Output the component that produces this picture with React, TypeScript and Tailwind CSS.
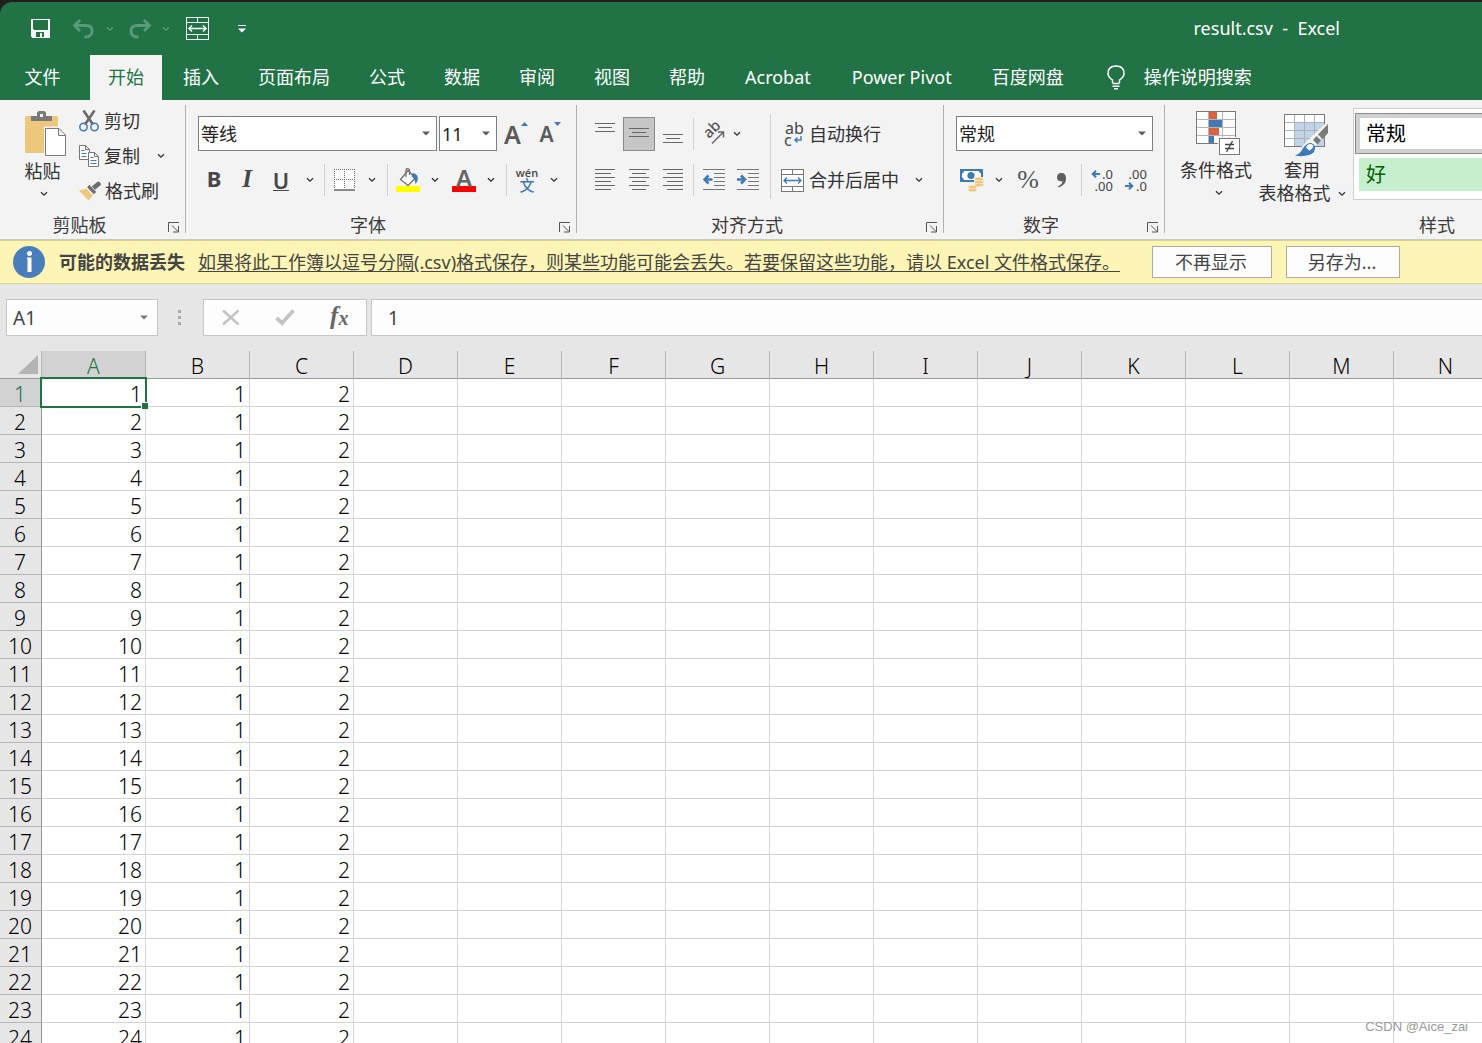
import React, { useState } from "react";

const UI = "font-['Noto_Sans','Noto_Sans_CJK_SC',sans-serif]";
const COLUMNS = ["A", "B", "C", "D", "E", "F", "G", "H", "I", "J", "K", "L", "M", "N"];
const ROWS = Array.from({ length: 24 }, (_, i) => [i + 1, 1, 2]);
const TABS = ["插入", "页面布局", "公式", "数据", "审阅", "视图", "帮助", "Acrobat", "Power Pivot", "百度网盘"];

type Kids = { children?: React.ReactNode };

function Chevron({ className = "text-[#333]" }: { className?: string }) {
  return (
    <svg width="8" height="6" viewBox="0 0 8 6" className={className} fill="none" stroke="currentColor" strokeWidth="1.3" aria-hidden="true">
      <path d="M1 1.2 4 4.2 7 1.2" />
    </svg>
  );
}

function Caret({ className = "text-[#5e5e5e]" }: { className?: string }) {
  return (
    <svg width="8" height="5" viewBox="0 0 8 5" className={className} fill="currentColor" aria-hidden="true">
      <path d="M0 .5h8L4 4.6z" />
    </svg>
  );
}

function Tool({ label, className = "w-[34px]", children }: Kids & { label: string; className?: string }) {
  return (
    <button type="button" aria-label={label} title={label} className={`flex h-[34px] shrink-0 items-center justify-center ${className}`}>
      {children}
    </button>
  );
}

function Drop({ label, className = "w-5" }: { label: string; className?: string }) {
  return (
    <Tool label={label} className={className}>
      <Chevron />
    </Tool>
  );
}

function Sep({ className = "mx-[3px] h-8" }: { className?: string }) {
  return <div className={`w-px shrink-0 self-center bg-[#d0d0d0] ${className}`} />;
}

function Group({ title, width, launcher = true, children }: Kids & { title: string; width: string; launcher?: boolean }) {
  return (
    <section aria-label={title} className={`flex shrink-0 ${width}`}>
      <div className="flex min-w-0 flex-1 flex-col">
        <div className="h-[112px]">{children}</div>
        <div className="flex h-[26px] items-center">
          <h2 className="flex-1 text-center text-[18px] leading-6 text-[#3b3b3b]">{title}</h2>
          {launcher && (
            <button type="button" aria-label={`${title}设置`} className="flex w-[26px] justify-end pt-1 pr-[5px]">
              <svg width="12" height="11" viewBox="0 0 12 11" fill="none" stroke="#555" aria-hidden="true">
                <path d="M.5 10V.5H11M4 3.5l6 6M10.500 4v6H5" />
              </svg>
            </button>
          )}
        </div>
      </div>
      {launcher && <div className="mt-[5px] h-32 w-px bg-[#b1b1b1]" />}
    </section>
  );
}

function Combo({ label, value, className }: { label: string; value: string; className: string }) {
  return (
    <div className={`relative h-[35px] ${className}`}>
      <select
        aria-label={label}
        defaultValue={value}
        className="h-full w-full appearance-none border border-[#7f7f7f] bg-white pl-0.5 text-[18px] leading-8 text-[#222] outline-none"
      >
        <option>{value}</option>
      </select>
      <span className="pointer-events-none absolute inset-y-0 right-[7px] flex items-center">
        <Caret />
      </span>
    </div>
  );
}

function Lines({ rows }: { rows: [number, number, number][] }) {
  return (
    <svg width="20" height="22" viewBox="0 0 20 22" fill="#666" shapeRendering="crispEdges" aria-hidden="true">
      {rows.map(([x, y, w]) => (
        <rect key={y} x={x} y={y} width={w} height="1" />
      ))}
    </svg>
  );
}

function IndentIcon({ out }: { out: boolean }) {
  return (
    <svg width="22" height="22" viewBox="0 0 22 22" aria-hidden="true">
      <path d="M0 .5h22M11 4.500h11M11 8.500h11M11 12.500h11M11 16.500h11M0 20.500h22" stroke="#777" />
      <path
        d={out ? "M9.500 10.500H2M5.500 6.500l-4 4 4 4" : "M0 10.500h7.500M4 6.500l4 4-4 4"}
        fill="none"
        stroke="#3f7ab5"
        strokeWidth="2.600"
      />
    </svg>
  );
}

function MergeIcon({ frame, arrow, fill }: { frame: string; arrow: string; fill: string }) {
  return (
    <svg width="23" height="23" viewBox="0 0 23 23" fill="none" aria-hidden="true">
      <rect x=".5" y=".5" width="22" height="22" fill={fill} stroke={frame} />
      <path d="M0 5.500h23M0 17.500h23M11.500 1v4M11.500 18v4" stroke={frame} />
      <path d="M3 11.500h17M6 8.500l-3 3 3 3M17 8.500l3 3-3 3" stroke={arrow} strokeWidth="1.400" />
    </svg>
  );
}

function PasteIcon() {
  return (
    <svg width="42" height="46" viewBox="0 0 42 46" aria-hidden="true">
      <rect y="5" width="33" height="37" rx="1.500" fill="#edc77c" />
      <path d="M6 5h6V2.500Q12 0 14.500 0h4Q21 0 21 2.500V5h6v5H6z" fill="#7a7a7a" />
      <rect x="15" y="3" width="3" height="3" fill="#f3f3f3" />
      <path d="M19 15.500h16L42 22.500V46H19z" fill="#f3f3f3" />
      <path d="M20.500 17.500h13.500l6.500 6.500v20.500h-20zM33.500 17.500V24.500h7" fill="#fff" stroke="#7a7a7a" />
    </svg>
  );
}

function CutIcon() {
  return (
    <svg width="20" height="22" viewBox="0 0 20 22" fill="none" aria-hidden="true">
      <path d="M4.500.5 14 14.500M15.500.5 6 14.500" stroke="#6a6a6a" strokeWidth="2.600" />
      <circle cx="4.500" cy="17" r="3.700" stroke="#3f7ab5" strokeWidth="1.500" />
      <circle cx="15.500" cy="17" r="3.700" stroke="#3f7ab5" strokeWidth="1.500" />
    </svg>
  );
}

function CopyIcon() {
  return (
    <svg width="20" height="22" viewBox="0 0 20 22" fill="#fff" aria-hidden="true">
      <path d="M.5.5h6l4 4v10H.5zM6.500.5v4h4" stroke="#777" />
      <path d="M2.500 5.500h3M2.500 8.500h5M2.500 11.500h5" stroke="#3f7ab5" />
      <path d="M9.500 7.500h6l4 4v10h-10zM15.500 7.500v4h4" stroke="#777" />
      <path d="M11.500 12.500h3M11.500 15.500h6M11.500 18.500h6" stroke="#3f7ab5" />
    </svg>
  );
}

function BrushIcon() {
  return (
    <svg width="22" height="20" viewBox="0 0 23 20" aria-hidden="true">
      <path d="M0 9.500 7.500 7.500 14.500 14.500 10 20Z" fill="#edc77c" />
      <path d="M8.500 6 11 3.500 18 11 15.500 13.500z" fill="#6d6d6d" />
      <path d="M13 5.500 19 .5Q20.500-.5 22 1t.5 3L16.500 9z" fill="#6d6d6d" />
      <path d="M12 4.500 17 9.500" stroke="#f3f3f3" strokeWidth=".8" />
    </svg>
  );
}

function BucketIcon() {
  return (
    <svg width="24" height="24" viewBox="0 0 24 24" fill="none" aria-hidden="true">
      <path d="M12 2.500 19.500 10 12 17.500 4.500 11.500z" fill="#fff" stroke="#6a6a6a" strokeWidth="1.200" />
      <path d="M10 9V2Q10 .7 11.500 .7T13.500 2v5" stroke="#6a6a6a" strokeWidth="1.200" />
      <path d="M17 5q6 1 4.500 8l-2 3q-.5-5-4-8z" fill="#3f7ab5" />
      <rect y="18" width="24" height="6" fill="#ff0" />
    </svg>
  );
}

function CurrencyIcon() {
  return (
    <svg width="24" height="23" viewBox="0 0 24 23" aria-hidden="true">
      <rect width="23" height="13" fill="#3f7ab5" />
      <path d="M4 2h15q0 2 2 2.500v4q-2 0-2 2.500H4q0-2-2-2.500v-4Q4 4 4 2z" fill="#fff" />
      <circle cx="11" cy="6.500" r="3.600" fill="#3f7ab5" />
      <path d="M14 8h10v10h-6v5H7v-8h7z" fill="#f3f3f3" />
      <g fill="#edc77c" stroke="#f6e6c8" strokeWidth=".7">
        <ellipse cx="19" cy="16" rx="4.500" ry="1.700" />
        <ellipse cx="19" cy="13" rx="4.500" ry="1.700" />
        <ellipse cx="19" cy="10" rx="4.500" ry="1.700" />
        <ellipse cx="12.500" cy="21" rx="4.500" ry="1.700" />
        <ellipse cx="12.500" cy="18" rx="4.500" ry="1.700" />
      </g>
    </svg>
  );
}

function BlueArrow({ left = false }: { left?: boolean }) {
  return (
    <svg width="9" height="8" viewBox="0 0 9 8" fill="none" stroke="#3f7ab5" strokeWidth="2" className="mr-0.5" aria-hidden="true">
      <path d={left ? "M9 4H2M5 .7 1.700 4 5 7.300" : "M0 4h7M4 .7 7.300 4 4 7.300"} />
    </svg>
  );
}

function DecimalIcon({ more }: { more: boolean }) {
  return (
    <span className="flex flex-col font-['Noto_Sans',sans-serif] text-[13px] leading-3 text-[#444]">
      <span className="flex items-center justify-end">
        {more && <BlueArrow left />}
        {more ? ".0" : ".00"}
      </span>
      <span className="flex items-center justify-end">
        {!more && <BlueArrow />}
        {more ? ".00" : ".0"}
      </span>
    </span>
  );
}

function ConditionalIcon() {
  return (
    <svg width="44" height="44" viewBox="0 0 44 44" aria-hidden="true">
      <rect x=".5" y=".5" width="39" height="32" fill="#fff" stroke="#7a7a7a" />
      <path d="M12.500 1v31M26.500 1v31M1 8.500h38M1 16.500h38M1 24.500h38" stroke="#b5b5b5" />
      <rect x="13" y="1" width="8" height="7" fill="#dc6141" />
      <rect x="13" y="9" width="13" height="7" fill="#3f7ab5" />
      <rect x="13" y="17" width="10" height="7" fill="#dc6141" />
      <rect x="13" y="25" width="5" height="7" fill="#3f7ab5" />
      <rect x="22" y="26" width="22" height="18" fill="#f3f3f3" />
      <rect x="23.500" y="27.500" width="20" height="16" fill="#fff" stroke="#7a7a7a" />
      <path d="M29 33.500h9M29 37.500h9M36.500 30l-6 11" stroke="#444" strokeWidth="1.300" />
    </svg>
  );
}

function TableFormatIcon() {
  return (
    <svg width="44" height="43" viewBox="0 0 44 43" aria-hidden="true">
      <rect x=".5" y=".5" width="40" height="32" fill="#fff" stroke="#7a7a7a" />
      <rect x="10" y="9" width="30" height="23" fill="#c0d4ea" />
      <path d="M10.500 1v31M20.500 1v31M30.500 1v31M1 8.500h39M1 16.500h39M1 24.500h39" stroke="#b0b0b0" />
      <path d="M44 7v9L29 35l-9 8H9l12-14z" fill="#f3f3f3" />
      <path d="M44 10v9L38.500 25l-4.500-4.500z" fill="#7a7a7a" />
      <path d="M32.500 22l4.500 4.500-3.500 4-4.500-4.500z" fill="#7a7a7a" />
      <path d="M22 31q5-4 9 1 1 7-6 9-7 2-14 .5 5-2 7-5.500 1-3 4-5z" fill="#3f7ab5" />
      <path d="M22.500 31q5-3.500 7.500 1l-1.500 3-3 2-4-3z" fill="#fff" stroke="#3f7ab5" />
    </svg>
  );
}

function TitleBar() {
  return (
    <header className="flex h-[53px] shrink-0 items-center rounded-tl-xl bg-[#217346] text-white">
      <div className="flex items-center pl-[31px]">
        <button type="button" aria-label="保存" className="w-[19px]">
          <svg width="19" height="19" viewBox="0 0 19 19" shapeRendering="crispEdges" aria-hidden="true">
            <path fillRule="evenodd" d="M0 0h19v19H1l-1-1zM2 1v9l1 1h13l1-1V1zM5 13v5h4v-4h2v4h2v-5z" fill="#f6faf7" />
          </svg>
        </button>
        <button type="button" aria-label="撤消" className="ml-[22px] w-6 text-[#5a9a77]">
          <svg width="24" height="20" viewBox="0 0 24 20" fill="none" stroke="currentColor" strokeWidth="2.800" aria-hidden="true">
            <path d="M8 1 2.500 6.500 8 12M3 6.500h11q6 0 6 5.500t-6 6h-1.500" />
          </svg>
        </button>
        <button type="button" aria-label="撤消选项" className="flex w-7 justify-center">
          <Chevron className="text-[#5a9a77]" />
        </button>
        <button type="button" aria-label="恢复" className="ml-1 w-6 text-[#5a9a77]">
          <svg width="24" height="20" viewBox="0 0 24 20" fill="none" stroke="currentColor" strokeWidth="2.800" aria-hidden="true">
            <path d="M16 1l5.500 5.500L16 12M21 6.500H9q-6 0-6 5.500t6 6h1.500" />
          </svg>
        </button>
        <button type="button" aria-label="恢复选项" className="flex w-7 justify-center">
          <Chevron className="text-[#5a9a77]" />
        </button>
        <button type="button" aria-label="合并后居中" className="ml-1.5 w-6">
          <MergeIcon frame="#f2f8f4" arrow="#ffffff" fill="none" />
        </button>
        <button type="button" aria-label="自定义快速访问工具栏" className="ml-7">
          <svg width="8" height="8" viewBox="0 0 8 8" fill="#fff" aria-hidden="true">
            <path d="M0 0h8v1H0zM0 3.500h8l-4 4z" />
          </svg>
        </button>
      </div>
      <h1 className="ml-auto pr-[142px] pb-0.5 text-[18px] leading-6 whitespace-pre">{"result.csv  -  Excel"}</h1>
    </header>
  );
}

function TabBar() {
  return (
    <nav aria-label="功能区" className="flex h-[45px] shrink-0 overflow-hidden bg-[#217346] text-[18px] leading-6 whitespace-nowrap text-white">
      <div className="flex gap-[3px]">
        <button type="button" className="w-[87px] pr-0.5 pb-0.5">文件</button>
        <button type="button" className="bg-[#f3f3f3] px-[18px] pb-0.5 text-[#217346]">开始</button>
        {TABS.map((t) => (
          <button type="button" key={t} className={/^[A-Z]/.test(t) ? "px-[19px] pb-0.5" : "px-[18px] pb-0.5"}>
            {t}
          </button>
        ))}
      </div>
      <label className="flex flex-1 items-center pl-[25px]">
        <svg width="18" height="25" viewBox="0 0 18 25" fill="none" stroke="#fff" strokeWidth="1.500" aria-hidden="true">
          <path d="M5.500 18v-3Q1 12 1 8.500 1 1 9 1t8 7.500q0 3.500-4.500 6.500v3M5.500 18.500h7M5.500 21.200h7M7 23.800h4" />
        </svg>
        <input aria-label="操作说明搜索" placeholder="操作说明搜索" className="ml-[19px] w-40 bg-transparent pb-0.5 outline-none placeholder:text-white" />
      </label>
    </nav>
  );
}

function Ribbon() {
  const row = "flex items-center";
  return (
    <div className="flex h-[140px] shrink-0 overflow-hidden border-b border-[#c8c8c8] bg-[#f3f3f3] text-[18px] leading-6 whitespace-nowrap text-[#333]">
      <Group title="剪贴板" width="w-[186px]">
        <div className="flex">
          <button type="button" className="flex w-[79px] flex-col items-center pt-[11px] pl-1.5">
            <span className="pl-1.5"><PasteIcon /></span>
            <span className="pt-0.5">粘贴</span>
            <span className="pt-2 pl-0.5"><Chevron /></span>
          </button>
          <div className="flex flex-col pt-[3px]">
            <button type="button" className="flex h-[35px] items-center gap-[5px]"><CutIcon />剪切</button>
            <div className="flex h-[35px] items-center">
              <button type="button" className="flex items-center gap-[5px]"><CopyIcon />复制</button>
              <button type="button" aria-label="复制选项" className="ml-[17px]"><Chevron /></button>
            </div>
            <button type="button" className="flex h-[35px] items-center gap-1"><BrushIcon />格式刷</button>
          </div>
        </div>
      </Group>

      <Group title="字体" width="w-[391px]">
        <div className="flex flex-col gap-3 pt-4 pl-3">
          <div className={row}>
            <Combo label="字体" value="等线" className="w-[239px]" />
            <Combo label="字号" value="11" className="ml-0.5 w-[58px]" />
            <Tool label="增大字号">
              <span className="flex pl-1 text-[#5a5a5a]">
                <span className="text-[25px] font-semibold">A</span>
                <svg width="7" height="4" viewBox="0 0 7 4" fill="#3f7ab5" aria-hidden="true"><path d="M0 4h7L3.500 0z" /></svg>
              </span>
            </Tool>
            <Tool label="减小字号">
              <span className="flex pl-1 text-[#5a5a5a]">
                <span className="text-[21px] font-semibold">A</span>
                <svg width="7" height="4" viewBox="0 0 7 4" fill="#3f7ab5" aria-hidden="true"><path d="M0 0h7L3.500 4z" /></svg>
              </span>
            </Tool>
          </div>
          <div className={`${row} text-[#484848]`}>
            <Tool label="加粗" className="w-8"><b className="pb-1 text-[22px]">B</b></Tool>
            <Tool label="倾斜"><i className="pb-0.5 font-['Liberation_Serif',serif] text-[25px] font-bold">I</i></Tool>
            <Tool label="下划线"><span className="border-b border-[#484848] text-[22px] leading-5 font-semibold">U</span></Tool>
            <Drop label="下划线选项" className="w-[23px]" />
            <Sep />
            <Tool label="边框" className="w-8">
              <svg width="21" height="22" viewBox="0 0 21 22" fill="none" stroke="#666" aria-hidden="true">
                <rect width="21" height="21" fill="#fff" stroke="none" />
                <path d="M0 .5h21M0 10.500h21M.5 0v20M10.500 0v20M20.500 0v20" strokeDasharray="1 1" />
                <path d="M0 21h21" strokeWidth="1.500" />
              </svg>
            </Tool>
            <Drop label="边框选项" className="w-6" />
            <Sep />
            <Tool label="填充颜色"><BucketIcon /></Tool>
            <Drop label="填充颜色选项" />
            <Tool label="字体颜色" className="w-[38px]">
              <span className="flex flex-col items-center border-b-[6px] border-[#f00] px-1 text-[24px] leading-[17px] font-semibold text-[#666]">A</span>
            </Tool>
            <Drop label="字体颜色选项" className="w-4" />
            <Sep className="mr-[3px] ml-[7px] h-8" />
            <Tool label="拼音">
              <span className="flex flex-col items-center">
                <span className="font-['Open_Sans',sans-serif] text-[11px] leading-[9px] font-semibold">wén</span>
                <span className="font-['Noto_Sans_CJK_SC',sans-serif] text-[15px] leading-[15px] font-medium text-[#3f7ab5]">文</span>
              </span>
            </Tool>
            <Drop label="拼音选项" />
          </div>
        </div>
      </Group>

      <Group title="对齐方式" width="w-[367px]">
        <div className="flex pl-[11px]">
          <div className="flex flex-col gap-3 pt-4">
            <div className={`${row} h-[35px]`}>
              <Tool label="顶端对齐"><Lines rows={[[0, 0, 20], [3, 4, 14], [0, 8, 20]]} /></Tool>
              <button type="button" aria-label="垂直居中" aria-pressed="true" className="mx-px flex h-[34px] w-8 items-center justify-center border border-[#8a8a8a] bg-[#c6c6c6]">
                <Lines rows={[[0, 5, 20], [3, 9, 14], [0, 13, 20]]} />
              </button>
              <Tool label="底端对齐"><Lines rows={[[0, 11, 20], [3, 15, 14], [0, 19, 20]]} /></Tool>
              <Sep />
              <Tool label="方向">
                <svg width="24" height="24" viewBox="0 0 24 24" className="overflow-visible" aria-hidden="true">
                  <text transform="translate(7 17) rotate(-45)" fontSize="15" fontWeight="500" fill="#555">ab</text>
                  <path d="M10 21.500 21 10.500M16 10h5.500v5.500" fill="none" stroke="#666" strokeWidth="1.500" />
                </svg>
              </Tool>
              <Drop label="方向选项" className="w-3" />
            </div>
            <div className={row}>
              <Tool label="左对齐"><Lines rows={[[0, 0, 20], [0, 4, 16], [0, 8, 20], [0, 12, 16], [0, 16, 20], [0, 20, 16]]} /></Tool>
              <Tool label="居中"><Lines rows={[[0, 0, 20], [3, 4, 14], [0, 8, 20], [3, 12, 14], [0, 16, 20], [3, 20, 14]]} /></Tool>
              <Tool label="右对齐"><Lines rows={[[0, 0, 20], [4, 4, 16], [0, 8, 20], [4, 12, 16], [0, 16, 20], [4, 20, 16]]} /></Tool>
              <Sep />
              <Tool label="减少缩进量"><IndentIcon out /></Tool>
              <Tool label="增加缩进量"><IndentIcon out={false} /></Tool>
            </div>
          </div>
          <Sep className="mx-[5px] mt-3.5 h-[85px]" />
          <div className="flex flex-col gap-3 pt-4 pl-[5px]">
            <button type="button" className="flex h-[35px] items-center gap-1">
              <span className="flex w-6 flex-col pl-[3px] text-[16px] leading-3 text-[#444]">
                <span>ab</span>
                <span className="flex items-center gap-px">
                  c
                  <svg width="9" height="8" viewBox="0 0 9 8" fill="none" stroke="#3f7ab5" strokeWidth="1.400" aria-hidden="true">
                    <path d="M8 0v4H2M4.500 1.500 2 4l2.500 2.500" />
                  </svg>
                </span>
              </span>
              自动换行
            </button>
            <div className="flex h-[34px] items-center">
              <button type="button" className="flex items-center gap-[5px]">
                <MergeIcon frame="#777" arrow="#3f7ab5" fill="#fff" />合并后居中
              </button>
              <button type="button" aria-label="合并选项" className="ml-4"><Chevron /></button>
            </div>
          </div>
        </div>
      </Group>

      <Group title="数字" width="w-[221px]">
        <div className="flex flex-col gap-3 pt-4 pl-3">
          <Combo label="数字格式" value="常规" className="w-[197px]" />
          <div className={row}>
            <Tool label="会计数字格式" className="w-8"><CurrencyIcon /></Tool>
            <Drop label="会计格式选项" className="w-[22px]" />
            <Tool label="百分比样式" className="w-9"><span className="font-['Liberation_Serif',serif] text-[26px] text-[#555]">%</span></Tool>
            <Tool label="千位分隔样式" className="w-8">
              <svg width="10" height="15" viewBox="0 0 10 15" fill="#5e5e5e" aria-hidden="true">
                <path d="M4.500 0Q9 0 9 5.500 9 12 1.500 14.500L1 13.300Q5.500 11 5.500 8.200 0 9 0 4.300 0 0 4.500 0z" />
              </svg>
            </Tool>
            <Sep />
            <Tool label="增加小数位数"><DecimalIcon more /></Tool>
            <Tool label="减少小数位数"><DecimalIcon more={false} /></Tool>
          </div>
        </div>
      </Group>

      <Group title="样式" width="w-[544px]" launcher={false}>
        <div className="flex">
          <button type="button" className="flex w-[94px] flex-col items-center pt-[11px] pl-2">
            <span className="pl-1"><ConditionalIcon /></span>
            <span className="pt-[3px]">条件格式</span>
            <span className="pt-2 pl-1.5"><Chevron /></span>
          </button>
          <button type="button" className="flex w-[94px] flex-col items-center pt-3.5 pr-2 leading-[23px]">
            <span className="pl-2"><TableFormatIcon /></span>
            <span className="pt-0.5">套用</span>
            <span className="flex items-center gap-[7px]">表格格式<Chevron /></span>
          </button>
          <div className="mt-2 flex h-[92px] flex-1 flex-col border border-[#d0d0d0] bg-white text-[20px]">
            <button type="button" className="m-px mt-1 h-[41px] border border-[#8a8a8a] text-left text-black">
              <span className="flex h-full items-center border-4 border-[#d0d0d0] pl-1.5">常规</span>
            </button>
            <button type="button" className="mx-[5px] mt-[3px] h-[33px] bg-[#c6efce] pl-[7px] text-left text-[#006100]">好</button>
          </div>
        </div>
      </Group>
    </div>
  );
}

function MessageBar() {
  return (
    <div role="status" className="flex h-11 shrink-0 items-center overflow-hidden border-y border-[#d8d48a] bg-[#fcf5b5] pl-[13px] text-[18px] leading-6 whitespace-nowrap text-[#444]">
      <svg width="32" height="32" viewBox="0 0 32 32" aria-hidden="true">
        <circle cx="16" cy="16" r="16" fill="#4a7ebb" />
        <circle cx="16.500" cy="7.500" r="2.500" fill="#fff" />
        <path d="M14 11.500h4.500v14.500h-4V13H14z" fill="#fff" />
      </svg>
      <strong className="ml-3.5 shrink-0">可能的数据丢失</strong>
      <a href="#save" className="ml-[13px] w-[924px] shrink-0 underline underline-offset-2">
        如果将此工作簿以逗号分隔(.csv)格式保存，则某些功能可能会丢失。若要保留这些功能，请以 Excel 文件格式保存。
      </a>
      <button type="button" className="ml-[30px] h-8 w-[120px] shrink-0 border border-[#ababab] bg-[#fdfdfd] pr-0.5">不再显示</button>
      <button type="button" className="ml-3.5 h-8 w-[114px] shrink-0 border border-[#ababab] bg-[#fdfdfd] pr-0.5">另存为...</button>
    </div>
  );
}

function FormulaBar() {
  const [value, setValue] = useState("1");
  return (
    <div className="flex h-[67px] shrink-0 items-start bg-[#e6e6e6] pt-[15px] pl-1.5 text-[19px] text-[#444]">
      <div className="relative h-[37px] w-[152px]">
        <input aria-label="名称框" defaultValue="A1" className="h-full w-full border border-[#c6c6c6] bg-[#fdfdfd] pl-1.5 outline-none" />
        <span className="pointer-events-none absolute inset-y-0 right-[10px] flex items-center"><Caret className="text-[#777]" /></span>
      </div>
      <svg width="3" height="15" viewBox="0 0 3 15" fill="#aaa" className="mx-5 mt-[11px]" aria-hidden="true">
        <path d="M0 0h3v3H0zM0 6h3v3H0zM0 12h3v3H0z" />
      </svg>
      <div className="ml-0.5 flex h-[37px] w-[164px] items-center justify-around border border-[#c6c6c6] bg-[#fdfdfd]">
        <button type="button" aria-label="取消">
          <svg width="18" height="17" viewBox="0 0 18 17" stroke="#c3c3c3" strokeWidth="2.400" aria-hidden="true"><path d="M1 1.500 16.500 15.500M16.500 1.500 1 15.500" /></svg>
        </button>
        <button type="button" aria-label="输入">
          <svg width="20" height="17" viewBox="0 0 20 17" fill="none" stroke="#c3c3c3" strokeWidth="3.800" aria-hidden="true"><path d="M1.500 9 7 14 18.500 1.500" /></svg>
        </button>
        <button type="button" aria-label="插入函数" className="flex pb-0.5 font-['Liberation_Serif',serif] leading-6 text-[#666] italic">
          <span className="text-[25px] font-bold">f</span>
          <span className="pt-0.5 text-[20px] font-bold">x</span>
        </button>
      </div>
      <input
        aria-label="编辑栏"
        value={value}
        onChange={(e) => setValue(e.target.value)}
        className="ml-1 h-[37px] min-w-0 flex-1 border border-r-0 border-[#c6c6c6] bg-[#fdfdfd] pl-4 outline-none"
      />
    </div>
  );
}

function Sheet() {
  return (
    <div className="min-h-0 flex-1 overflow-hidden bg-white font-['Noto_Sans',sans-serif] text-[21px] leading-6 font-light text-black">
      <table className="w-max table-fixed border-separate border-spacing-0">
        <thead>
          <tr className="h-7 bg-[#e6e6e6]">
            <th aria-label="全选" className="h-7 w-[42px] border-r border-b border-[#999] border-r-[#b5b5b5] p-0">
              <svg width="20" height="19" viewBox="0 0 20 19" fill="#b4b4b4" className="ml-[18px]" aria-hidden="true"><path d="M20 0v19H0z" /></svg>
            </th>
            {COLUMNS.map((c, i) => (
              <th
                key={c}
                scope="col"
                className={`h-7 w-[104px] border-r border-b border-[#999] border-r-[#b5b5b5] p-0 pt-[3px] font-light ${i === 0 ? "bg-[#d2d2d2] text-[#217346]" : ""}`}
              >
                {c}
              </th>
            ))}
          </tr>
        </thead>
        <tbody>
          {ROWS.map((cells, r) => (
            <tr key={r} className="h-7">
              <th
                scope="row"
                className={`h-7 border-r border-b border-[#b5b5b5] border-r-[#999] p-0 pt-[3px] pr-px font-light ${r === 0 ? "bg-[#d2d2d2] text-[#217346]" : "bg-[#e6e6e6]"}`}
              >
                {r + 1}
              </th>
              {COLUMNS.map((c, i) => {
                const active = r === 0 && i === 0;
                return (
                  <td key={c} className={`h-7 border-r border-b border-[#d4d4d4] p-0 pt-[3px] pr-[3px] text-right ${active ? "relative z-10" : ""}`}>
                    {cells[i]}
                    {active && (
                      <span className="pointer-events-none absolute -inset-0.5 border-2 border-[#217346]">
                        <span className="absolute -right-[3px] -bottom-[3px] size-[7px] border-t border-l border-white bg-[#217346]" />
                      </span>
                    )}
                  </td>
                );
              })}
            </tr>
          ))}
        </tbody>
      </table>
    </div>
  );
}

export default function App() {
  return (
    <div className={`relative flex h-screen flex-col overflow-hidden bg-[#1f1f1f] pt-0.5 ${UI}`}>
      <TitleBar />
      <TabBar />
      <Ribbon />
      <MessageBar />
      <FormulaBar />
      <Sheet />
      <p className="absolute right-3.5 bottom-2 font-['Liberation_Sans',sans-serif] text-[13px] leading-4 text-[#999]">CSDN @Aice_zai</p>
    </div>
  );
}
